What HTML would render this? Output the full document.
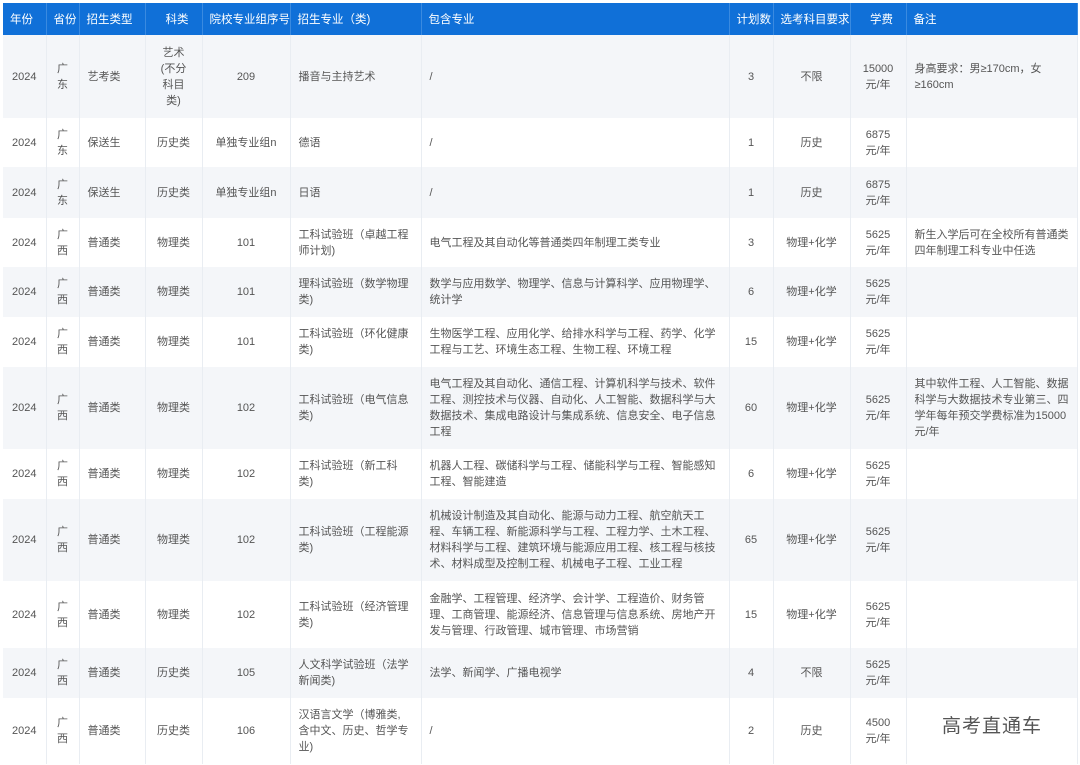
<!DOCTYPE html>
<html><head><meta charset="utf-8"><style>
html,body{margin:0;padding:0;background:#fff;}
body{width:1080px;height:765px;overflow:hidden;position:relative;font-family:"Liberation Sans","Noto Sans CJK SC",sans-serif;}
table{position:absolute;left:3px;top:3px;border-collapse:collapse;table-layout:fixed;width:1074px;font-size:11px;color:#555;}
th{background:#1070d8;color:#fff;font-weight:normal;height:32px;text-align:left;padding:0 0 0 7px;border-right:1px solid #3a8ae0;font-size:11.5px;white-space:nowrap;overflow:hidden;}
td{padding:0 8px;line-height:16px;border-right:1px solid #e9edf2;vertical-align:middle;}
tr:nth-child(even) td{background:#f4f6f9;}
.c{text-align:center;}
.w{position:absolute;left:942px;top:711px;font-size:19px;color:#555;font-family:"Noto Sans CJK SC",sans-serif;letter-spacing:1px;}
</style></head><body>
<table>
<colgroup><col style="width:43px"><col style="width:33px"><col style="width:66px"><col style="width:57px"><col style="width:88px"><col style="width:131px"><col style="width:308px"><col style="width:44px"><col style="width:77px"><col style="width:56px"><col style="width:171px"></colgroup>
<tr><th>年份</th><th>省份</th><th>招生类型</th><th style="text-align:center">科类</th><th>院校专业组序号</th><th>招生专业（类)</th><th>包含专业</th><th>计划数</th><th>选考科目要求</th><th style="text-align:center">学费</th><th>备注</th></tr>
<tr style="height:83px"><td class="c">2024</td><td class="c">广<br>东</td><td>艺考类</td><td class="c">艺术<br>(不分<br>科目<br>类)</td><td class="c">209</td><td>播音与主持艺术</td><td>/</td><td class="c">3</td><td class="c">不限</td><td class="c">15000<br>元/年</td><td>身高要求：男≥170cm，女<br>≥160cm</td></tr>
<tr style="height:49px"><td class="c">2024</td><td class="c">广<br>东</td><td>保送生</td><td class="c">历史类</td><td class="c">单独专业组n</td><td>德语</td><td>/</td><td class="c">1</td><td class="c">历史</td><td class="c">6875<br>元/年</td><td></td></tr>
<tr style="height:51px"><td class="c">2024</td><td class="c">广<br>东</td><td>保送生</td><td class="c">历史类</td><td class="c">单独专业组n</td><td>日语</td><td>/</td><td class="c">1</td><td class="c">历史</td><td class="c">6875<br>元/年</td><td></td></tr>
<tr style="height:49px"><td class="c">2024</td><td class="c">广<br>西</td><td>普通类</td><td class="c">物理类</td><td class="c">101</td><td>工科试验班（卓越工程<br>师计划)</td><td>电气工程及其自动化等普通类四年制理工类专业</td><td class="c">3</td><td class="c">物理+化学</td><td class="c">5625<br>元/年</td><td>新生入学后可在全校所有普通类四年制理工科专业中任选</td></tr>
<tr style="height:50px"><td class="c">2024</td><td class="c">广<br>西</td><td>普通类</td><td class="c">物理类</td><td class="c">101</td><td>理科试验班（数学物理<br>类)</td><td>数学与应用数学、物理学、信息与计算科学、应用物理学、统计学</td><td class="c">6</td><td class="c">物理+化学</td><td class="c">5625<br>元/年</td><td></td></tr>
<tr style="height:50px"><td class="c">2024</td><td class="c">广<br>西</td><td>普通类</td><td class="c">物理类</td><td class="c">101</td><td>工科试验班（环化健康<br>类)</td><td>生物医学工程、应用化学、给排水科学与工程、药学、化学工程与工艺、环境生态工程、生物工程、环境工程</td><td class="c">15</td><td class="c">物理+化学</td><td class="c">5625<br>元/年</td><td></td></tr>
<tr style="height:82px"><td class="c">2024</td><td class="c">广<br>西</td><td>普通类</td><td class="c">物理类</td><td class="c">102</td><td>工科试验班（电气信息<br>类)</td><td>电气工程及其自动化、通信工程、计算机科学与技术、软件工程、测控技术与仪器、自动化、人工智能、数据科学与大数据技术、集成电路设计与集成系统、信息安全、电子信息工程</td><td class="c">60</td><td class="c">物理+化学</td><td class="c">5625<br>元/年</td><td>其中软件工程、人工智能、数据科学与大数据技术专业第三、四学年每年预交学费标准为15000元/年</td></tr>
<tr style="height:50px"><td class="c">2024</td><td class="c">广<br>西</td><td>普通类</td><td class="c">物理类</td><td class="c">102</td><td>工科试验班（新工科<br>类)</td><td>机器人工程、碳储科学与工程、储能科学与工程、智能感知工程、智能建造</td><td class="c">6</td><td class="c">物理+化学</td><td class="c">5625<br>元/年</td><td></td></tr>
<tr style="height:82px"><td class="c">2024</td><td class="c">广<br>西</td><td>普通类</td><td class="c">物理类</td><td class="c">102</td><td>工科试验班（工程能源<br>类)</td><td>机械设计制造及其自动化、能源与动力工程、航空航天工程、车辆工程、新能源科学与工程、工程力学、土木工程、材料科学与工程、建筑环境与能源应用工程、核工程与核技术、材料成型及控制工程、机械电子工程、工业工程</td><td class="c">65</td><td class="c">物理+化学</td><td class="c">5625<br>元/年</td><td></td></tr>
<tr style="height:67px"><td class="c">2024</td><td class="c">广<br>西</td><td>普通类</td><td class="c">物理类</td><td class="c">102</td><td>工科试验班（经济管理<br>类)</td><td>金融学、工程管理、经济学、会计学、工程造价、财务管理、工商管理、能源经济、信息管理与信息系统、房地产开发与管理、行政管理、城市管理、市场营销</td><td class="c">15</td><td class="c">物理+化学</td><td class="c">5625<br>元/年</td><td></td></tr>
<tr style="height:50px"><td class="c">2024</td><td class="c">广<br>西</td><td>普通类</td><td class="c">历史类</td><td class="c">105</td><td>人文科学试验班（法学<br>新闻类)</td><td>法学、新闻学、广播电视学</td><td class="c">4</td><td class="c">不限</td><td class="c">5625<br>元/年</td><td></td></tr>
<tr style="height:66px"><td class="c">2024</td><td class="c">广<br>西</td><td>普通类</td><td class="c">历史类</td><td class="c">106</td><td>汉语言文学（博雅类,<br>含中文、历史、哲学专<br>业)</td><td>/</td><td class="c">2</td><td class="c">历史</td><td class="c">4500<br>元/年</td><td></td></tr>
</table>
<div class="w">高考直通车</div>
</body></html>
